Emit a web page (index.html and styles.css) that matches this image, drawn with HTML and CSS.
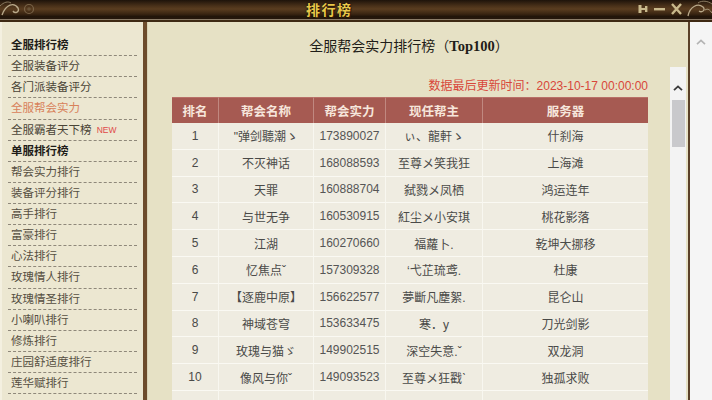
FILE: index.html
```html
<!DOCTYPE html>
<html lang="zh-CN">
<head>
<meta charset="utf-8">
<title>排行榜</title>
<link rel="stylesheet" href="styles.css">
</head>
<body>
<div class="window">
  <header class="titlebar">
    <svg class="orn orn-left" width="40" height="17" viewBox="0 0 40 17">
      <path d="M2 15 C6 4 14 2 18 8 C20 12 15 14 13 11" fill="none" stroke="#b9a98a" stroke-width="1.4"/>
      <path d="M0 6 C4 2 8 1 11 3" fill="none" stroke="#8a7a60" stroke-width="1"/>
      <circle cx="29" cy="9" r="4.5" fill="none" stroke="#7a6448" stroke-width="1.2"/>
      <circle cx="29" cy="9" r="1.8" fill="#6a5438"/>
    </svg>
    <div class="title">排行榜</div>
    <div class="controls">
      <svg width="10" height="12" viewBox="0 0 10 12"><rect x="0.5" y="2" width="3" height="8" fill="#c9b98c"/><rect x="7" y="3" width="2.4" height="6" fill="#c9b98c"/><rect x="3" y="5" width="4.5" height="2" fill="#c9b98c"/></svg>
      <svg width="11" height="12" viewBox="0 0 11 12"><rect x="0" y="5" width="11" height="2.4" fill="#c9b98c"/></svg>
      <svg width="11" height="12" viewBox="0 0 11 12"><path d="M1 1 L10 11 M10 1 L1 11" stroke="#c9b98c" stroke-width="2.4"/></svg>
    </div>
    <svg class="orn orn-right" width="26" height="17" viewBox="0 0 26 17">
      <path d="M2 16 C4 6 12 3 17 7 C20 10 16 13 13 11" fill="none" stroke="#b9a98a" stroke-width="1.3"/>
      <path d="M12 3 C16 0 22 1 26 4" fill="none" stroke="#8a7a60" stroke-width="1"/>
      <path d="M19 10 C22 8 24 10 26 13" fill="none" stroke="#a8987a" stroke-width="1"/>
    </svg>
  </header>
  <div class="frame">
    <nav class="sidebar">
      <ul class="menu">
        <li class="head">全服排行榜</li>
        <li>全服装备评分</li>
        <li>各门派装备评分</li>
        <li class="active">全服帮会实力</li>
        <li>全服霸者天下榜 <span class="new">NEW</span></li>
        <li class="head">单服排行榜</li>
        <li class="sub">帮会实力排行</li>
        <li class="sub">装备评分排行</li>
        <li class="sub">高手排行</li>
        <li class="sub">富豪排行</li>
        <li class="sub">心法排行</li>
        <li class="sub">玫瑰情人排行</li>
        <li class="sub">玫瑰情圣排行</li>
        <li class="sub">小喇叭排行</li>
        <li class="sub">修炼排行</li>
        <li class="sub">庄园舒适度排行</li>
        <li class="sub">莲华赋排行</li>
      </ul>
    </nav>
    <main class="main">
      <h1 class="heading">全服帮会实力排行榜（<span class="latin">Top100</span>）</h1>
      <div class="scrollarea">
        <div class="content">
          <p class="stamp">数据最后更新时间：2023-10-17 00:00:00</p>
          <table class="rank">
            <colgroup>
              <col class="c1"><col class="c2"><col class="c3"><col class="c4"><col class="c5">
            </colgroup>
            <thead>
              <tr><th>排名</th><th>帮会名称</th><th>帮会实力</th><th>现任帮主</th><th>服务器</th></tr>
            </thead>
            <tbody>
              <tr><td>1</td><td>"弹剑聽潮ゝ</td><td>173890027</td><td>ぃ、龍軒ゝ</td><td>什刹海</td></tr>
              <tr><td>2</td><td>不灭神话</td><td>168088593</td><td>至尊メ笑我狂</td><td>上海滩</td></tr>
              <tr><td>3</td><td>天罪</td><td>160888704</td><td>弑戮メ凤栖</td><td>鸿运连年</td></tr>
              <tr><td>4</td><td>与世无争</td><td>160530915</td><td>紅尘メ小安琪</td><td>桃花影落</td></tr>
              <tr><td>5</td><td>江湖</td><td>160270660</td><td>福蘿卜.</td><td>乾坤大挪移</td></tr>
              <tr><td>6</td><td>忆焦点ˇ</td><td>157309328</td><td>‘弋芷琉鸢.</td><td>杜康</td></tr>
              <tr><td>7</td><td>【逐鹿中原】</td><td>156622577</td><td>夢斷凡塵絮.</td><td>昆仑山</td></tr>
              <tr><td>8</td><td>神域苍穹</td><td>153633475</td><td>寒．y</td><td>刀光剑影</td></tr>
              <tr><td>9</td><td>玫瑰与猫ゞ</td><td>149902515</td><td>深空失意.ˇ</td><td>双龙洞</td></tr>
              <tr><td>10</td><td>像风与你ˇ</td><td>149093523</td><td>至尊メ狂戳ˋ</td><td>独孤求败</td></tr>
              <tr class="blank"><td></td><td></td><td></td><td></td><td></td></tr>
            </tbody>
          </table>
        </div>
        <div class="vscroll">
          <svg class="arrow" width="10" height="6" viewBox="0 0 10 6"><path d="M1 5.2 L5 1.4 L9 5.2" fill="none" stroke="#3a3a3a" stroke-width="1.8"/></svg>
          <div class="thumb"></div>
        </div>
      </div>
    </main>
    <div class="outer-scroll">
      <svg class="arrow" width="10" height="6" viewBox="0 0 10 6"><path d="M1 5.2 L5 1.4 L9 5.2" fill="none" stroke="#b4b4b4" stroke-width="1.6"/></svg>
    </div>
  </div>
</div>
</body>
</html>
```

FILE: styles.css
```css
* { box-sizing: border-box; }
html, body { margin: 0; padding: 0; }
body {
  width: 712px;
  height: 400px;
  overflow: hidden;
  background: #e6e1c5;
  font-family: "Liberation Sans", "Noto Sans CJK SC", sans-serif;
}
.window { width: 712px; height: 400px; display: flex; flex-direction: column; }

.titlebar {
  height: 22px;
  flex: none;
  display: flex;
  align-items: flex-start;
  background:
    linear-gradient(to bottom, transparent 0, transparent 17px, #24160b 17px, #24160b 19px, #8c7c68 19px, #8c7c68 20px, #3e2914 20px, #3e2914 22px),
    linear-gradient(to bottom, #1e130a 0, #4a3119 6px, #5a3d20 9px, #3a2512 14px, #1c1108 17px, #1c1108 22px);
}
.orn { display: block; flex: none; }
.title {
  margin-left: 266px;
  font-family: "Noto Sans CJK SC", sans-serif;
  font-weight: bold;
  font-size: 14px;
  line-height: 18px;
  color: #e9c84a;
  letter-spacing: 1.5px;
  text-shadow: 0 0 2px #000, 1px 1px 0 #3a2008;
}
.controls {
  margin-left: auto;
  height: 17px;
  display: flex;
  align-items: center;
  gap: 6px;
  margin-right: 4px;
}
.controls svg { display: block; }

.frame { flex: 1; display: flex; min-height: 0; }

.sidebar {
  width: 147px;
  flex: none;
  background: #ece7d1;
  border-left: 2px solid #f4f0e0;
  border-right: 4px solid #6d4c2c;
  padding: 13px 6px 0 6px;
}
.menu { list-style: none; margin: 0; padding: 0; }
.menu li {
  height: 21.125px;
  line-height: 20px;
  padding-left: 3px;
  font-size: 11.5px;
  color: #4a4436;
  border-bottom: 1px dashed #8f887a;
  white-space: nowrap;
}
.menu li.head { font-weight: bold; color: #1e1c18; }
.menu li.sub { color: #564f42; }
.menu li.active { color: #d8815a; }
.new {
  font-family: "Liberation Sans", sans-serif;
  font-size: 8.5px;
  color: #e04848;
  margin-left: 2px;
  vertical-align: 1px;
}

.main {
  flex: 1;
  min-width: 0;
  display: flex;
  flex-direction: column;
  background: #e6e1c5;
  border-left: 1px solid #d8d2b4;
}
.heading {
  margin: 0;
  height: 45px;
  padding-top: 14px;
  padding-right: 18px;
  line-height: 18px;
  text-align: center;
  font-family: "Noto Sans CJK SC", sans-serif;
  font-size: 14px;
  font-weight: normal;
  color: #1f1d18;
}
.heading .latin {
  font-family: "Liberation Serif", serif;
  font-weight: bold;
  font-size: 14.5px;
}

.scrollarea { flex: 1; display: flex; min-height: 0; }
.content {
  flex: 1;
  min-width: 0;
  padding: 0 22px 0 24px;
  overflow: hidden;
}
.stamp {
  margin: 11px 0 3px 0;
  line-height: 16px;
  text-align: right;
  font-size: 12px;
  color: #d8473a;
}

.rank {
  width: 476px;
  table-layout: fixed;
  border-collapse: separate;
  border-spacing: 0;
  font-size: 12px;
}
.rank col.c1 { width: 46px; }
.rank col.c2 { width: 95px; }
.rank col.c3 { width: 72px; }
.rank col.c4 { width: 97px; }
.rank col.c5 { width: 166px; }
.rank th {
  height: 26px;
  padding: 0;
  background: #a65a52;
  color: #f6e6dc;
  font-weight: bold;
  font-size: 12.5px;
  font-family: "Noto Sans CJK SC", sans-serif;
  border-left: 1px solid #c08880;
  border-top: 1px solid #b87068;
}
.rank th:first-child { border-left: none; }
.rank td {
  height: 26.8px;
  padding: 0;
  text-align: center;
  background: #efece1;
  color: #4a4a48;
  border-bottom: 1px solid #faf9f3;
  border-left: 1px solid #f8f7f0;
  white-space: nowrap;
  overflow: hidden;
}
.rank td:first-child { border-left: none; }
.rank td:nth-child(3) { color: #555; }

.vscroll {
  width: 16px;
  flex: none;
  margin-right: 2px;
  background: #f3f3f3;
  display: flex;
  flex-direction: column;
  align-items: center;
  padding-top: 18px;
}
.vscroll .arrow { display: block; }
.thumb {
  margin-top: 9px;
  width: 13px;
  height: 47px;
  background: #c9c9cc;
}

.outer-scroll {
  width: 24px;
  flex: none;
  background: #f5f5f5;
  border-left: 2px solid #5a4028;
  display: flex;
  flex-direction: column;
  align-items: center;
  padding-top: 17px;
}
.outer-scroll .arrow { display: block; }
```
